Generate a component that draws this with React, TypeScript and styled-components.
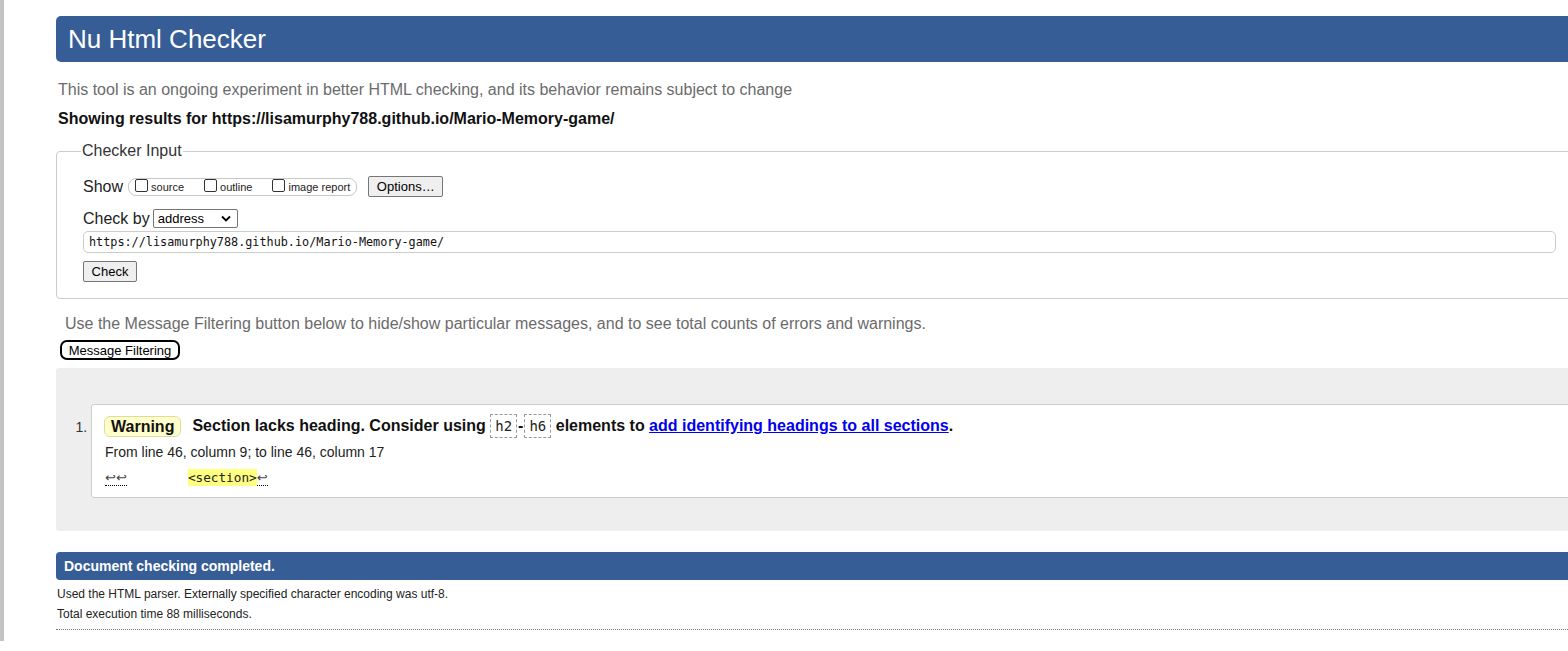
import React from "react";
import styled, { createGlobalStyle } from "styled-components";

const GlobalStyle = createGlobalStyle`
  html, body {
    margin: 0;
    padding: 0;
    background: #ffffff;
    overflow: hidden;
  }
  body {
    font-family: "Liberation Sans", Arial, sans-serif;
    color: #111;
  }
`;

const Page = styled.div`
  display: flex;
  align-items: flex-start;
  width: 1700px;
`;

const Sidebar = styled.div`
  flex: 0 0 4px;
  width: 4px;
  height: 641px;
  background: #c3c3c3;
`;

const Main = styled.main`
  flex: 0 0 1620px;
  margin-left: 52px;
  display: flex;
  flex-direction: column;
`;

const Title = styled.h1`
  margin: 16px 0 0;
  height: 46px;
  line-height: 46px;
  padding-left: 12px;
  background: #365d95;
  color: #fff;
  font-size: 26px;
  font-weight: normal;
  border-radius: 5px;
`;

const Intro = styled.p`
  margin: 19px 0 0 2px;
  font-size: 16px;
  line-height: 18px;
  color: #6b6b6b;
`;

const ResultsFor = styled.p`
  margin: 11px 0 0 2px;
  font-size: 16px;
  line-height: 18px;
  font-weight: bold;
  color: #111;
`;

const Fieldset = styled.fieldset`
  margin: 14px 0 0;
  padding: 7px 0 16px 26px;
  border: 1px solid #cccccc;
  border-radius: 4px;
  display: flex;
  flex-direction: column;
  min-width: 0;
`;

const Legend = styled.legend`
  margin-left: -2px;
  padding: 0 1px;
  font-size: 16px;
  line-height: 18px;
  color: #333;
`;

const Row = styled.div<{ $mt?: number }>`
  display: flex;
  align-items: center;
  margin-top: ${(p) => p.$mt ?? 0}px;
`;

const RowLabel = styled.span<{ $gap?: number }>`
  font-size: 16px;
  color: #222;
  margin-right: ${(p) => p.$gap ?? 5}px;
`;

const Pill = styled.span`
  display: inline-flex;
  align-items: center;
  height: 18px;
  box-sizing: border-box;
  border: 1px solid #c8c8c8;
  border-radius: 8px;
  padding: 0 6px 0 6px;
`;

const CheckItem = styled.label<{ $last?: boolean }>`
  display: inline-flex;
  align-items: center;
  margin-right: ${(p) => (p.$last ? 0 : 20)}px;
  font-size: 11px;
  color: #222;
`;

const Box = styled.span`
  width: 13px;
  height: 13px;
  box-sizing: border-box;
  border: 1px solid #333;
  border-radius: 2px;
  background: #fff;
  margin-right: 3px;
  margin-top: -2px;
`;

const Button = styled.button<{ $ml?: number; $w?: number }>`
  margin-left: ${(p) => p.$ml ?? 0}px;
  height: 21px;
  width: ${(p) => p.$w ?? 74}px;
  padding: 0;
  font-family: "Liberation Sans", Arial, sans-serif;
  font-size: 13px;
  color: #000;
  background: #efefef;
  border: 1px solid #767676;
  border-radius: 2px;
`;

const Select = styled.span`
  display: inline-flex;
  align-items: center;
  justify-content: space-between;
  box-sizing: border-box;
  width: 85px;
  height: 19px;
  padding: 0 6px 0 4px;
  border: 1px solid #767676;
  border-radius: 2px;
  font-size: 13px;
  color: #000;
`;

const UrlInput = styled.div`
  margin-top: 3px;
  width: 1473px;
  height: 22px;
  box-sizing: border-box;
  border: 1px solid #cccccc;
  border-radius: 5px;
  padding: 0 5px;
  display: flex;
  align-items: center;
  font-family: "DejaVu Sans Mono", "Liberation Mono", monospace;
  font-size: 11.8px;
  color: #111;
`;

const FilterHint = styled.p`
  margin: 16px 0 0 9px;
  font-size: 16px;
  line-height: 18px;
  color: #6b6b6b;
`;

const FilterButton = styled.button`
  align-self: flex-start;
  margin: 7px 0 0 4px;
  height: 20px;
  width: 120px;
  padding: 0;
  background: #fff;
  border: 2px solid #000;
  border-radius: 7px;
  font-family: "Liberation Sans", Arial, sans-serif;
  font-size: 13px;
  color: #000;
`;

const Results = styled.div`
  margin-top: 8px;
  background: #eeeeee;
  padding: 36px 0 33px;
  border-radius: 3px 0 0 3px;
`;

const MessageList = styled.ol`
  margin: 0;
  padding: 0 0 0 35px;
`;

const MessageItem = styled.li`
  background: #fff;
  border: 1px solid #cccccc;
  border-radius: 3px;
  padding: 9px 0 10px 12px;
  font-size: 14px;
  color: #444;
  &::marker {
    color: #333;
    font-size: 14px;
  }
`;

const MessageLine = styled.p`
  margin: 0;
  display: flex;
  align-items: center;
  font-size: 16px;
  font-weight: bold;
  color: #111;
  line-height: 24px;
`;

const Badge = styled.strong`
  display: inline-block;
  box-sizing: border-box;
  height: 21px;
  line-height: 19px;
  padding: 0 6px;
  margin-right: 11px;
  background: #ffffcc;
  border: 1px solid #dddd99;
  border-radius: 6px;
  font-size: 16px;
  color: #111;
`;

const Code = styled.code`
  display: inline-block;
  box-sizing: border-box;
  height: 24px;
  line-height: 22px;
  padding: 0 4px;
  border: 1px dashed #999;
  font-family: "DejaVu Sans Mono", "Liberation Mono", monospace;
  font-weight: normal;
  font-size: 14px;
  color: #222;
`;

const Dash = styled.span`
  margin: 0 1px;
`;

const Pre = styled.span`
  white-space: pre;
`;

const Link = styled.a`
  color: #0000ee;
  text-decoration: underline;
`;

const Location = styled.p`
  margin: 5px 0 0 1px;
  font-size: 14px;
  line-height: 18px;
  color: #222;
`;

const Extract = styled.p`
  margin: 8px 0 0 1px;
  font-family: "DejaVu Sans Mono", "Liberation Mono", monospace;
  font-size: 12.7px;
  line-height: 18px;
  color: #222;
  white-space: pre;
`;

const LineBreak = styled.span`
  font-family: "DejaVu Sans", sans-serif;
  font-size: 13px;
  border-bottom: 1px dotted #000;
  color: #444;
`;

const Mark = styled.mark`
  background: #ffff80;
  color: #222;
  padding: 1px 0;
`;

const Completed = styled.p`
  margin: 21px 0 0;
  height: 28px;
  line-height: 28px;
  padding-left: 8px;
  background: #365d95;
  color: #fff;
  font-size: 14px;
  font-weight: bold;
  border-radius: 4px;
`;

const Detail = styled.p<{ $mt: number }>`
  margin: ${(p) => p.$mt}px 0 0 1px;
  font-size: 12px;
  line-height: 14px;
  color: #222;
`;

const DottedRule = styled.hr`
  margin: 8px 0 0;
  border: 0;
  border-top: 1px dotted #777;
  height: 0;
`;

const Chevron = () => (
  <svg width="10" height="7" viewBox="0 0 10 7" aria-hidden="true">
    <path d="M1 1.5 L5 5.5 L9 1.5" fill="none" stroke="#000" strokeWidth="1.8" />
  </svg>
);

export default function App() {
  return (
    <>
      <GlobalStyle />
      <Page>
        <Sidebar />
        <Main>
          <Title>Nu Html Checker</Title>
          <Intro>
            This tool is an ongoing experiment in better HTML checking, and its behavior remains subject to change
          </Intro>
          <ResultsFor>Showing results for https://lisamurphy788.github.io/Mario-Memory-game/</ResultsFor>
          <Fieldset>
            <Legend>Checker Input</Legend>
            <Row $mt={9}>
              <RowLabel>Show</RowLabel>
              <Pill>
                <CheckItem>
                  <Box />
                  source
                </CheckItem>
                <CheckItem>
                  <Box />
                  outline
                </CheckItem>
                <CheckItem $last>
                  <Box />
                  image report
                </CheckItem>
              </Pill>
              <Button $ml={11} $w={75}>Options…</Button>
            </Row>
            <Row $mt={12}>
              <RowLabel $gap={3}>Check by</RowLabel>
              <Select>
                address
                <Chevron />
              </Select>
            </Row>
            <UrlInput>https://lisamurphy788.github.io/Mario-Memory-game/</UrlInput>
            <Row $mt={8}>
              <Button $w={54}>Check</Button>
            </Row>
          </Fieldset>
          <FilterHint>
            Use the Message Filtering button below to hide/show particular messages, and to see total counts of errors and warnings.
          </FilterHint>
          <FilterButton>Message Filtering</FilterButton>
          <Results>
            <MessageList>
              <MessageItem>
                <MessageLine>
                  <Badge>Warning</Badge>
                  <Pre>Section lacks heading. Consider using </Pre>
                  <Code>h2</Code>
                  <Dash>-</Dash>
                  <Code>h6</Code>
                  <Pre> elements to </Pre>
                  <Link href="#">add identifying headings to all sections</Link>.
                </MessageLine>
                <Location>From line 46, column 9; to line 46, column 17</Location>
                <Extract>
                  <LineBreak>↩↩</LineBreak>
                  {"        "}
                  <Mark>&lt;section&gt;</Mark>
                  <LineBreak>↩</LineBreak>
                </Extract>
              </MessageItem>
            </MessageList>
          </Results>
          <Completed>Document checking completed.</Completed>
          <Detail $mt={7}>Used the HTML parser. Externally specified character encoding was utf-8.</Detail>
          <Detail $mt={6}>Total execution time 88 milliseconds.</Detail>
          <DottedRule />
        </Main>
      </Page>
    </>
  );
}
